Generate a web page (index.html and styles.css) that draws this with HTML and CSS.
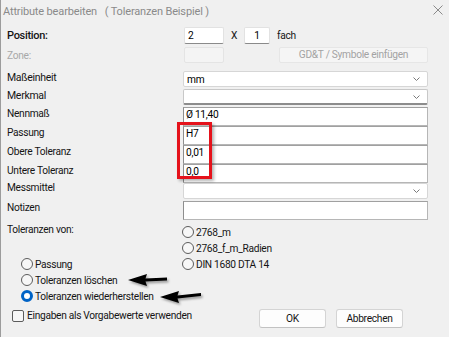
FILE: index.html
```html
<!DOCTYPE html>
<html lang="de">
<head>
<meta charset="UTF-8" />
<meta name="viewport" content="width=device-width, initial-scale=1" />
<title>Attribute bearbeiten</title>
<link rel="stylesheet" href="styles.css">
</head>
<body>

<div class="dialog">
  <div class="titlebar">
    <span class="title">Attribute bearbeiten&nbsp;&nbsp; ( Toleranzen Beispiel )</span>
    <svg class="close" width="10" height="10" viewBox="0 0 10 10"><path d="M0.5 0.5 L9.5 9.5 M9.5 0.5 L0.5 9.5" stroke="#8a8a8a" stroke-width="1" fill="none"/></svg>
  </div>

  <div class="row row-pos">
    <span class="label label-strong">Position:</span>
    <div class="box box-pos">2</div>
    <span class="times">X</span>
    <div class="box box-count">1</div>
    <span class="fach">fach</span>
  </div>

  <div class="row row-zone">
    <span class="label label-disabled">Zone:</span>
    <div class="box box-disabled"></div>
    <div class="btn-gdt">GD&amp;T / Symbole einfügen</div>
  </div>

  <div class="row row-unit">
    <span class="label label-medium">Maßeinheit</span>
    <div class="combo">mm<svg class="chev" width="7" height="4" viewBox="0 0 7 4"><path d="M0.5 0.5 L3.5 3.5 L6.5 0.5" stroke="#7a7a7a" fill="none"/></svg></div>
  </div>

  <div class="row row-merkmal">
    <span class="label label-medium">Merkmal</span>
    <div class="combo combo-focus"><svg class="chev" width="7" height="4" viewBox="0 0 7 4"><path d="M0.5 0.5 L3.5 3.5 L6.5 0.5" stroke="#7a7a7a" fill="none"/></svg></div>
  </div>

  <div class="row row-field">
    <span class="label">Nennmaß</span>
    <div class="field">Ø 11,40</div>
  </div>
  <div class="row row-field">
    <span class="label">Passung</span>
    <div class="field">H7</div>
  </div>
  <div class="row row-field">
    <span class="label">Obere Toleranz</span>
    <div class="field">0,01</div>
  </div>
  <div class="row row-field">
    <span class="label">Untere Toleranz</span>
    <div class="field">0,0</div>
  </div>

  <div class="row row-mess">
    <span class="label">Messmittel</span>
    <div class="combo combo-mess"><svg class="chev" width="7" height="4" viewBox="0 0 7 4"><path d="M0.5 0.5 L3.5 3.5 L6.5 0.5" stroke="#7a7a7a" fill="none"/></svg></div>
  </div>

  <div class="row row-notes">
    <span class="label">Notizen</span>
    <div class="field"></div>
  </div>

  <div class="tol">
    <div class="tol-left">
      <div class="tol-label">Toleranzen von:</div>
      <div class="radio-list radio-list-left">
        <div class="radio"><span class="dot"></span>Passung</div>
        <div class="radio"><span class="dot"></span>Toleranzen löschen</div>
        <div class="radio"><span class="dot dot-on"></span>Toleranzen wiederherstellen</div>
      </div>
    </div>
    <div class="radio-list radio-list-right">
      <div class="radio"><span class="dot"></span>2768_m</div>
      <div class="radio"><span class="dot"></span>2768_f_m_Radien</div>
      <div class="radio"><span class="dot"></span>DIN 1680 DTA 14</div>
    </div>
  </div>

  <div class="bottom">
    <div class="check"><span class="box-check"></span>Eingaben als Vorgabewerte verwenden</div>
    <div class="actions">
      <div class="btn">OK</div>
      <div class="btn">Abbrechen</div>
    </div>
  </div>

  <!-- annotations drawn over the dialog -->
  <div class="mark"></div>
  <svg class="arrows" width="90" height="42" viewBox="0 0 90 42">
    <defs>
      <filter id="sh" x="-20%" y="-40%" width="150%" height="200%">
        <feDropShadow dx="1.5" dy="2" stdDeviation="1.2" flood-color="#000" flood-opacity="0.35"/>
      </filter>
    </defs>
    <g fill="#000" filter="url(#sh)">
      <polygon points="8,12 27,6 25.5,10.5 47,9.5 47,12.5 25.5,13.5 27,18"/>
      <polygon points="40,29 59,23 57.5,27.5 81,25 81,28 57.5,30.5 59,35"/>
    </g>
  </svg>
</div>

</body>
</html>
```

FILE: styles.css
```css
body {
  margin: 0;
  background: #f0f0f0;
  font-family: Roboto, "Liberation Sans", sans-serif;
  font-size: 10.2px;
  letter-spacing: -0.3px;
  color: #151515;
}
.dialog {
  position: relative;
  width: 448px;
  height: 337px;
  border-left: 1px solid #9c9c9c;
  overflow: hidden;
}
.titlebar {
  height: 27px;
  display: flex;
  padding-left: 2px;
}
.title {
  font-size: 11px;
  letter-spacing: -0.15px;
  color: #8a8a8a;
  line-height: 24px;
}
.close {
  margin-left: auto;
  margin-right: 6px;
  margin-top: 5px;
}
.row {
  display: flex;
  align-items: flex-start;
  padding-left: 6px;
}
.label {
  width: 176px;
  flex: none;
  line-height: 14px;
}
.label-strong {
  font-size: 11px;
  font-weight: 500;
  line-height: 17px;
}
.label-medium {
  font-size: 10.5px;
}
.label-disabled {
  color: #a8a8a8;
  padding-top: 2px;
}

.row-pos { height: 17px; }
.row-zone { height: 16px; margin-top: 3px; }
.row-unit { height: 16px; margin-top: 8px; }
.row-merkmal { height: 16px; margin-top: 2px; }
.row-field { height: 19px; }
.row-merkmal + .row-field { margin-top: 2px; }
.row-mess { height: 16px; }
.row-mess .label { margin-top: -2px; }
.row-notes { height: 19px; margin-top: 2px; }

.box {
  box-sizing: border-box;
  height: 17px;
  background: #fff;
  border: 1px solid #e2e2e2;
  border-bottom-color: #8a8a8a;
  border-radius: 2px;
  line-height: 15px;
  color: #000;
}
.box-pos {
  width: 40px;
  margin-left: 1px;
  padding-left: 3px;
}
.box-count {
  width: 26px;
  text-align: center;
}
.times {
  width: 20px;
  text-align: center;
  line-height: 17px;
}
.fach {
  margin-left: 7px;
  line-height: 17px;
}
.box-disabled {
  height: 16px;
  background: #f4f4f4;
  border-color: #e4e4e4;
  margin-left: 1px;
  width: 40px;
}
.btn-gdt {
  box-sizing: border-box;
  width: 149px;
  height: 16px;
  margin-left: 55px;
  background: #f5f5f5;
  border: 1px solid #e6e6e6;
  border-radius: 2px;
  color: #a3a3a3;
  text-align: center;
  line-height: 14px;
}

.combo {
  box-sizing: border-box;
  width: 245px;
  height: 16px;
  background: #fff;
  border: 1px solid #d6d6d6;
  border-radius: 2px;
  display: flex;
  align-items: center;
  padding-left: 3px;
  color: #000;
}
.combo-focus {
  border-color: #c8c8c8;
  border-bottom: 2px solid #8c8c8c;
}
.chev {
  margin-left: auto;
  margin-right: 7px;
}
.field {
  box-sizing: border-box;
  width: 245px;
  height: 19px;
  background: #fff;
  border: 1px solid #b6b6b6;
  border-left-color: #8e8e8e;
  border-top-color: #a0a0a0;
  padding-left: 2px;
  line-height: 14px;
  color: #000;
}

.tol {
  display: grid;
  grid-template-columns: 175px auto;
  padding-left: 6px;
  height: 84px;
}
.tol-label {
  padding-top: 3px;
  line-height: 14px;
}
.radio-list-left {
  margin-top: 19px;
  padding-left: 14px;
}
.radio-list-right {
  padding-top: 4px;
}
.radio {
  display: flex;
  align-items: center;
  height: 16px;
  gap: 2px;
}
.dot {
  box-sizing: border-box;
  width: 12px;
  height: 12px;
  border: 1px solid #5c5c5c;
  border-radius: 50%;
  background: #f7f7f7;
}
.dot-on {
  border: 3.5px solid #0063c6;
  background: #fff;
}

.bottom {
  display: flex;
  margin-top: 5px;
  height: 19px;
}
.check {
  display: flex;
  align-items: center;
  gap: 3px;
  padding-left: 11px;
  height: 13px;
}
.box-check {
  box-sizing: border-box;
  width: 12px;
  height: 12px;
  border: 1px solid #5c5c5c;
  border-radius: 2px;
  background: #f7f7f7;
}
.actions {
  display: flex;
  gap: 10px;
  margin-left: auto;
  margin-right: 46px;
}
.btn {
  box-sizing: border-box;
  width: 67px;
  height: 19px;
  background: #fdfdfd;
  border: 1px solid #d4d4d4;
  border-bottom-color: #c2c2c2;
  border-radius: 3px;
  text-align: center;
  line-height: 17px;
}

.mark {
  position: absolute;
  left: 176px;
  top: 122px;
  width: 35px;
  height: 57px;
  box-sizing: border-box;
  border: 3px solid #e5121b;
  box-shadow: 2px 2px 3px rgba(0, 0, 0, 0.3);
}
.arrows {
  position: absolute;
  left: 119px;
  top: 268px;
}
```
